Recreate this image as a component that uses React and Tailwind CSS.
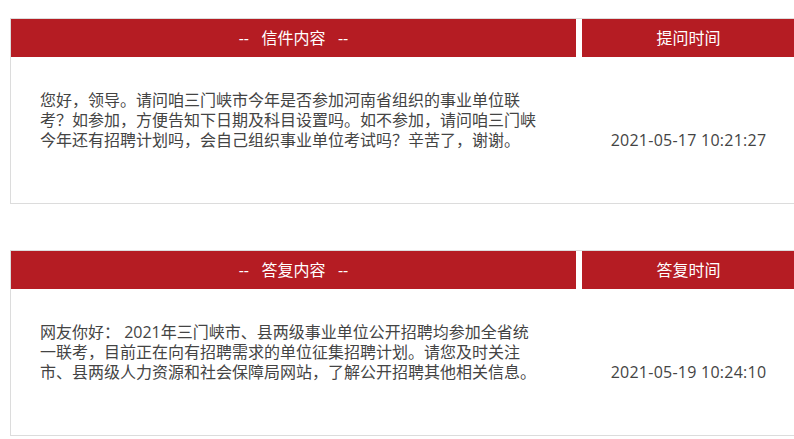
const font = { fontFamily: '"Open Sans", "Noto Sans CJK SC", sans-serif' };

const letters = [
  {
    head: "信件内容",
    timeHead: "提问时间",
    lines: [
      "您好，领导。请问咱三门峡市今年是否参加河南省组织的事业单位联",
      "考？如参加，方便告知下日期及科目设置吗。如不参加，请问咱三门峡",
      "今年还有招聘计划吗，会自己组织事业单位考试吗？辛苦了，谢谢。",
    ],
    time: "2021-05-17 10:21:27",
  },
  {
    head: "答复内容",
    timeHead: "答复时间",
    lines: [
      "网友你好： 2021年三门峡市、县两级事业单位公开招聘均参加全省统",
      "一联考，目前正在向有招聘需求的单位征集招聘计划。请您及时关注",
      "市、县两级人力资源和社会保障局网站，了解公开招聘其他相关信息。",
    ],
    time: "2021-05-19 10:24:10",
  },
];

function LetterTable({ item }) {
  return (
    <div className="w-[786px] shrink-0 border border-[#dcdcdc]">
      <div className="flex h-[38px] gap-[6px] text-white text-[16px]">
        <div className="w-[565px] bg-[#b51c23] flex items-center justify-center whitespace-pre">
          {"--   " + item.head + "   --"}
        </div>
        <div className="flex-1 bg-[#b51c23] flex items-center justify-center">
          {item.timeHead}
        </div>
      </div>
      <div className="flex h-[146px] text-[16px] leading-[20px] text-[#444]">
        <div className="w-[565px] pl-[29px] pt-[33px]">
          {item.lines.map((l, i) => (
            <div key={i} className="whitespace-nowrap">{l}</div>
          ))}
        </div>
        <div className="flex-1 ml-[6px] flex items-end justify-center pb-[53px] tracking-[0.25px]">
          {item.time}
        </div>
      </div>
    </div>
  );
}

export default function App() {
  return (
    <div className="w-[794px] h-[439px] bg-white overflow-hidden pt-[18px] pl-[10px]" style={font}>
      <div className="flex flex-col items-start gap-[46px]">
        {letters.map((item) => (
          <LetterTable key={item.head} item={item} />
        ))}
      </div>
    </div>
  );
}
